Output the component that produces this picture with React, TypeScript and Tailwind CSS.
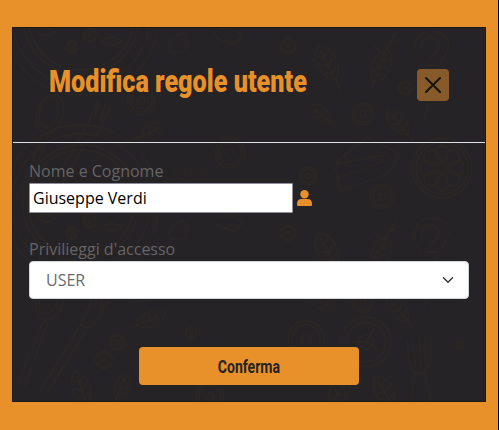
function Leaf({ x, y, r = 0, s = 1 }: { x: number; y: number; r?: number; s?: number }) {
  return (
    <g transform={`translate(${x} ${y}) rotate(${r}) scale(${s})`}>
      <path d="M0-18C12-9 12 8 0 18C-12 8-12-9 0-18ZM0-13V28M0-5L5-9M0-5L-5-9M0 3L7-2M0 3L-7-2M0 11L6 6M0 11L-6 6" />
    </g>
  );
}

function Ring({ x, y, r }: { x: number; y: number; r: number }) {
  return (
    <g transform={`translate(${x} ${y})`}>
      <circle r={r} />
      <circle r={r * 0.78} />
      <circle r={r * 0.28} />
    </g>
  );
}

function Citrus({ x, y, r }: { x: number; y: number; r: number }) {
  return (
    <g transform={`translate(${x} ${y}) scale(${r / 30})`}>
      <circle r="30" />
      <circle r="26" />
      {[0, 45, 90, 135, 180, 225, 270, 315].map((a) => (
        <path key={a} transform={`rotate(${a})`} d="M0-4L7-18Q0-27-7-18Z" />
      ))}
    </g>
  );
}

function Plate({ y }: { y: number }) {
  return (
    <g transform={`translate(81 ${y})`}>
      <circle r="78" />
      <circle r="69" />
      <circle r="58" />
      <circle r="53" />
      <Ring x={9} y={18} r={7} />
      <Ring x={-9} y={30} r={6} />
      <path d="M20 24Q31 17 41 24Q33 32 20 24ZM-43 15Q-34 8-25 15Q-35 23-43 15ZM-21 5Q-12-3-5 6Q-11 13-21 5Z" />
    </g>
  );
}

function Pattern() {
  return (
    <svg className="pointer-events-none absolute inset-0 h-full w-full" viewBox="13 28 472 373" fill="none" stroke="#292624" strokeWidth="1.8">
      <Plate y={17} />
      <Plate y={203} />
      {[0, 187].map((o) => (
        <g key={o} transform={`translate(0 ${o})`}>
          <path d="M170 52Q167 41 176 36Q187 28 187 45Q186 55 170 52ZM215 32Q225 24 243 35Q235 48 227 41Q217 43 215 32Z" />
          <Leaf x={327} y={63} r={-27} s={1.1} />
          <Leaf x={381} y={66} r={24} s={1} />
          <path d="M369 81Q382 58 397 31M382 53L373 44M388 45L402 38" />
          <Ring x={288} y={46} r={8} />
          <Ring x={405} y={88} r={7} />
          <path d="M421 68C406 42 419 28 438 32C457 39 446 56 438 66L424 120M426 65L436 65M422 51C417 39 433 33 439 43C439 53 431 54 429 61" />
          <Ring x={363} y={114} r={11} />
          <Leaf x={398} y={122} r={-38} s={0.9} />
          <Leaf x={320} y={114} r={-52} s={0.8} />
          <ellipse cx="50" cy="114" rx="13" ry="20" transform="rotate(18 50 114)" />
          <ellipse cx="49" cy="112" rx="9" ry="15" transform="rotate(18 49 112)" />
          <path d="M43 134L17 199M48 135L24 201M98 101L81 137Q87 145 96 135L111 107M94 119L99 103M100 121L105 105M81 137L40 204M87 142L46 208" />
          <Ring x={141} y={101} r={14} />
          <Leaf x={151} y={132} r={67} s={0.9} />
        </g>
      ))}
      <Citrus x={442} y={168} r={30} />
      <path d="M334 164L367 137L398 153Q398 166 386 174L341 191ZM334 164L385 155M337 178L393 158" />
      <Ring x={382} y={197} r={12} />
      <Ring x={308} y={176} r={9} />
      <Citrus x={188} y={182} r={19} />
      <Ring x={230} y={153} r={15} />
      <Ring x={117} y={342} r={8} />
      <Ring x={104} y={360} r={9} />
      <Leaf x={81} y={388} r={-18} />
      <Leaf x={122} y={386} r={26} s={0.8} />
      <Ring x={366} y={342} r={25} />
      <path d="M352 342L366 342L374 328M366 342L379 351M366 342L356 354" />
      <path d="M407 341L410 366Q418 383 430 363L430 336M413 340L415 365M419 338L421 366M425 337L425 363M414 373L412 401M424 371L431 401" />
      <Leaf x={384} y={391} r={-30} />
      <Leaf x={339} y={392} r={32} />
      <Ring x={191} y={333} r={6} />
      <Ring x={460} y={345} r={4} />
      <Ring x={306} y={339} r={18} />
      <Ring x={210} y={397} r={14} />
    </svg>
  );
}

export default function App() {
  return (
    <main className="h-[430px] w-[499px] overflow-hidden border-r border-black bg-[#e8912a] px-3 pt-[27px] font-['Open_Sans','Noto_Sans',sans-serif] text-base">
      <section className="relative h-[375px] w-[474px] overflow-hidden border border-[#1a191b] bg-[#252326]">
        <Pattern />
        <div className="relative">
          <header className="flex h-[115px] items-start justify-between border-b border-[#dee2e6] pl-9 pr-9">
            <h1 className="mt-8 w-[258px] whitespace-nowrap font-['Roboto',sans-serif] text-[32px] font-black leading-[42px] text-[#e8912a]">
              <span className="inline-block origin-left scale-x-[0.787]">Modifica regole utente</span>
            </h1>
            <button aria-label="Chiudi" className="mt-[41px] flex size-8 items-center justify-center rounded bg-[#875a29]">
              <svg width="16" height="16" viewBox="0 0 16 16" fill="none" stroke="#151412" strokeWidth="2" strokeLinecap="round">
                <path d="M1 1L15 15M15 1L1 15" />
              </svg>
            </button>
          </header>
          <form className="flex flex-col px-4 pt-4" onSubmit={(e) => e.preventDefault()}>
            <label htmlFor="name" className="h-6 leading-6 text-[#666465]">Nome e Cognome</label>
            <div className="flex h-[30px] items-center gap-[4px]">
              <input id="name" defaultValue="Giuseppe Verdi" className="h-[30px] w-[264px] rounded-[1px] border border-[#8f8f9d] bg-white px-[3px] text-black outline-none" />
              <svg width="15" height="16" viewBox="0 0 15 16" fill="#e8912a">
                <circle cx="7.5" cy="4.2" r="4.2" />
                <path d="M0 15V13.7Q0 9 4.6 9H10.4Q15 9 15 13.7V15Q15 16 14 16H1Q0 16 0 15Z" />
              </svg>
            </div>
            <label htmlFor="role" className="mt-6 h-6 leading-6 text-[#666465]">Privilieggi d'accesso</label>
            <button id="role" type="button" className="flex h-[38px] w-[440px] items-center justify-between rounded border border-[#ced4da] bg-white pl-4 pr-[14px] text-[#6b6b6b]">
              <span>USER</span>
              <svg width="12" height="12" viewBox="0 0 16 16" fill="none" stroke="#343a40" strokeWidth="2" strokeLinecap="round" strokeLinejoin="round">
                <path d="M2 5L8 11L14 5" />
              </svg>
            </button>
            <button type="submit" className="mt-12 flex h-[38px] w-[220px] items-center justify-center self-center rounded bg-[#e8912a] font-['Roboto',sans-serif] text-[18px] font-bold text-[#252326]">
              <span className="inline-block scale-x-[0.78]">Conferma</span>
            </button>
          </form>
        </div>
      </section>
    </main>
  );
}
